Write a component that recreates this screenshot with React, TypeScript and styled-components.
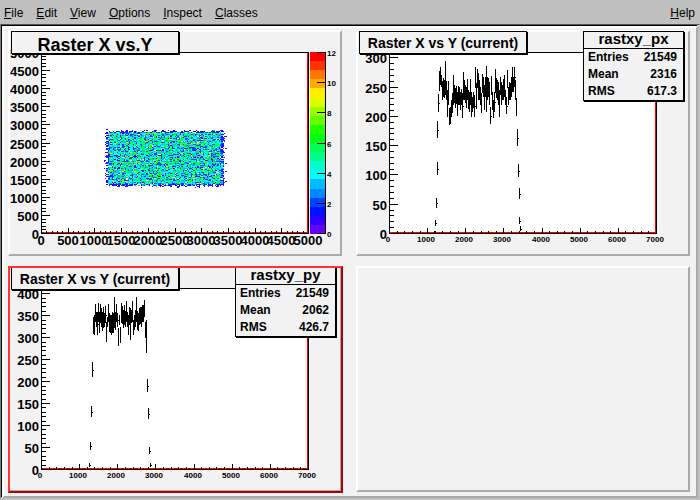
import React from "react";
import styled, { createGlobalStyle } from "styled-components";

const GlobalStyle = createGlobalStyle`
  * { box-sizing: border-box; }
  body { margin: 0; background: #c0c0c0; font-family: "Liberation Sans", Arial, sans-serif; color: #000; }
`;

const Window = styled.div`
  background: #c0c0c0;
`;

const MenuBar = styled.nav`
  display: flex;
  gap: 13px;
  height: 24px;
  padding: 0 5px 0 4px;
  align-items: center;
`;

const MenuButton = styled.button<{ $end?: boolean }>`
  border: 0;
  padding: 2px 0 0;
  background: none;
  font: 12px/16px "Liberation Sans", Arial, sans-serif;
  color: #000;
  margin-left: ${(p) => (p.$end ? "auto" : "0")};
  u { text-underline-offset: 1px; }
`;

const CanvasFrame = styled.div`
  border: 1px solid;
  border-color: #555 #c0c0c0 #c0c0c0 #808080;
`;

const Canvas = styled.main`
  display: grid;
  grid-template-columns: repeat(2, minmax(0, 1fr));
  gap: 10px 14px;
  padding: 2px 6px 4px 4px;
  background: #f2f2f2;
  border: 2px solid;
  border-color: #fff #aaa #aaa #fff;
  box-shadow: -1px -1px 0 #000;
  margin: 1px 1px 0 1px;
`;

const Pad = styled.section<{ $active?: boolean }>`
  position: relative;
  background: #f2f2f2;
  border: 2px solid;
  border-color: #fff #aaa #aaa #fff;
  &::after {
    content: "";
    display: ${(p) => (p.$active ? "block" : "none")};
    position: absolute;
    inset: -2px -3px -3px -2px;
    border: 2px solid;
    border-color: #ff3333 #b20000 #b20000 #ff3333;
    pointer-events: none;
  }
`;

const Plot = styled.svg`
  display: block;
  width: 100%;
  height: auto;
  font-family: "Liberation Sans", Arial, sans-serif;
  font-weight: bold;
`;

const PadTitle = styled.h2<{ $large?: boolean }>`
  position: absolute;
  top: -1px;
  left: 1px;
  width: 168px;
  height: 23px;
  margin: 0;
  border: 1px solid #000;
  box-shadow: 1px 1px 0 #000;
  background: #f2f2f2;
  text-align: center;
  white-space: nowrap;
  font-weight: bold;
  font-size: ${(p) => (p.$large ? "18px" : "14px")};
  line-height: ${(p) => (p.$large ? "26px" : "22px")};
`;

const Stats = styled.table`
  position: absolute;
  top: -1px;
  right: 4px;
  width: 101px;
  border-collapse: separate;
  border-spacing: 0;
  border: 1px solid #000;
  box-shadow: 1px 1px 0 #000;
  background: #f2f2f2;
  font-size: 12px;
  font-weight: bold;
  line-height: 17px;
  th, td { padding: 0 6px 0 4px; text-align: left; }
  th { padding-right: 0; }
  td { text-align: right; }
  thead th {
    height: 17px;
    padding: 0;
    border-bottom: 1px solid #000;
    font-size: 15px;
    line-height: 13px;
    text-align: center;
    vertical-align: top;
  }
`;

const LEFT = 31;
const RIGHT = 298;
const TOP = 20;
const BOTTOM = 201;

type Bar = [number, number, number];

const run = (start: number, text: string): Bar[] =>
  text.split(" ").map((pair, i) => {
    const [a, b] = pair.split("-").map(Number);
    return [start + i, a, b];
  });

const pxBody = run(
  80,
  "62-80 39-59 35-53 43-55 49-68 46-65 48-66 29-63 49-68 58-85 49-73 76-93 75-92 68-85 61-81 43-73 53-71 56-76 54-72 60-84 54-73 55-73 60-78 57-73 61-86 40-68 48-68 53-71 55-76 47-68 58-77 60-80 47-73 60-85 65-80 60-76 63-85 35-56 51-77 37-56 41-68 48-68 55-73 61-81 42-61 45-65 53-78 45-65 34-80 45-68 46-65 50-73 75-92 44-63 60-78 68-86 60-80 37-61 46-66 48-68 50-73 58-85 45-63 50-73 53-68 47-68 43-65 58-73 65-82 38-56 55-73 50-68 51-68 45-65 35-60 45-60 35-55 48-68 66-84"
);
const pxTails: Bar[] = [
  [79, 89, 106], [79, 130, 143], [78, 166, 176], [77, 188, 194], [76, 199, 201],
  [159, 97, 114], [160, 132, 145], [161, 156, 167], [161, 185, 192], [162, 194, 199],
];
const pyBody = run(
  83,
  "49-66 47-67 36-54 44-59 44-67 35-54 44-65 36-55 40-59 44-63 39-60 45-59 38-55 54-74 49-59 36-54 45-64 47-65 47-67 44-65 45-65 29-60 44-62 36-54 45-59 60-78 47-57 59-75 35-55 38-56 42-60 37-57 43-59 33-54 44-59 47-67 39-57 40-72 42-55 33-54 52-67 47-62 42-59 29-54 43-62 45-63 40-57 39-56 39-59 37-54 37-54 32-49 54-70 52-85"
);
const pyTails: Bar[] = [
  [82, 94, 109], [81, 138, 149], [80, 174, 182], [79, 195, 199],
  [137, 111, 124], [138, 140, 151], [139, 179, 186], [140, 195, 199],
];

const palette = [
  "#6600ff", "#3300ff", "#0011ff", "#0044ff", "#0088ff", "#00bbff", "#00ffff",
  "#00ffcc", "#00ff88", "#00ff55", "#00ff11", "#22ff00", "#66ff00", "#99ff00",
  "#ddff00", "#ffee00", "#ffaa00", "#ff7700", "#ff3300", "#ff0000",
];

const range = (n: number) => Array.from({ length: n }, (_, i) => i);

/* Axes and frame. Every major interval is split into five minor ones. */
function Axes(props: {
  xMax: number; xStep: number; yMax: number; yStep: number; smallX?: boolean;
}) {
  const { xMax, xStep, yMax, yStep, smallX } = props;
  const sx = (v: number) => Math.round(LEFT + (v / xMax) * (RIGHT - LEFT));
  const sy = (v: number) => Math.round(BOTTOM - (v / yMax) * (BOTTOM - TOP));
  const xs = range(Math.floor((xMax / xStep) * 5 + 0.01) + 1);
  const ys = range(Math.floor((yMax / yStep) * 5 + 0.01) + 1);
  const xTicks = xs.map((i) => {
    const h = i % 5 ? 2 : 5;
    return `M${sx((i * xStep) / 5)} ${BOTTOM - h}h1v${h}h-1z`;
  });
  const yTicks = ys.map((i) => `M${LEFT} ${sy((i * yStep) / 5)}h${i % 5 ? 5 : 9}v1h-${i % 5 ? 5 : 9}z`);
  return (
    <g>
      <g shapeRendering="crispEdges">
        <path d={`M${LEFT} ${BOTTOM - 1}H${RIGHT}v1H${LEFT}zM${RIGHT - 1} ${TOP}h1V${BOTTOM}h-1z`} fill="#f00" />
        <path
          d={`M${LEFT} ${TOP}H${RIGHT + 1}V${BOTTOM + 1}H${LEFT}zM${LEFT + 1} ${TOP + 1}V${BOTTOM}H${RIGHT}V${TOP + 1}z`}
          fillRule="evenodd"
        />
        <path d={xTicks.join("") + yTicks.join("")} />
      </g>
      {ys.filter((i) => i % 5 === 0).map((i) => (
        <text key={i} x={29} y={sy((i * yStep) / 5) + 6} fontSize={13} textAnchor="end">
          {(i * yStep) / 5}
        </text>
      ))}
      {xs.filter((i) => i % 5 === 0).map((i) => (
        <text
          key={i}
          x={sx((i * xStep) / 5) - (smallX ? 1 : 0)}
          y={smallX ? 210 : 213}
          fontSize={smallX ? 8 : 13}
          textAnchor="middle"
        >
          {(i * xStep) / 5}
        </text>
      ))}
    </g>
  );
}

function Profile({ body, tails, yMax }: { body: Bar[]; tails: Bar[]; yMax: number }) {
  const bars = [...body, ...tails].map(([x, a, b]) => `M${x} ${a}h1V${b}h-1z`);
  const marks = tails.map(([x, a, b]) => `M${x} ${Math.round((a + b) / 2)}h2v1h-2z`);
  const nubs = body
    .filter((_, i) => i % 4 === 0)
    .map(([x, a, b]) => `M${x} ${Math.round((a + b) / 2)}h2v1h-2z`);
  return (
    <Plot viewBox="0 0 330 222" role="img">
      <rect x={LEFT} y={TOP} width={RIGHT - LEFT} height={BOTTOM - TOP} fill="#fff" />
      <Axes xMax={7000} xStep={1000} yMax={yMax} yStep={50} smallX />
      <path d={[...bars, ...marks, ...nubs].join("")} shapeRendering="crispEdges" />
    </Plot>
  );
}

/* Bins of 25 x 25 units filled with Poisson counts, one path per colour. */
function buildScatter() {
  let seed = 20617;
  const rand = () => {
    seed = (seed * 1664525 + 1013904223) % 4294967296;
    return seed / 4294967296;
  };
  const poisson = (mean: number) => {
    const limit = Math.exp(-mean);
    let n = 0;
    let p = rand();
    while (p > limit) {
      n += 1;
      p *= rand();
    }
    return n;
  };
  const edge = (d: number) => (d < -3 ? 0 : d < -2 ? 0.01 : d < -1 ? 0.06 : d < 0 ? 0.25 : d < 1 ? 0.55 : d < 2 ? 0.8 : 1);
  const px = (i: number) => Math.round(LEFT + (i * (RIGHT - LEFT)) / 200);
  const py = (j: number) => Math.round(BOTTOM - (j * (BOTTOM - TOP)) / 200);
  const paths = palette.map(() => "");
  for (let i = 45; i < 142; i += 1) {
    for (let j = 48; j < 118; j += 1) {
      const weight = edge(Math.min(i - 50, 135 - i)) * edge(Math.min(j - 53, 111 - j));
      const n = Math.min(12, poisson(3.9 * weight));
      if (n > 0) {
        const color = Math.min(19, Math.floor((n * 20) / 12));
        const top = py(j + 1);
        paths[color] += `M${px(i)} ${top}H${px(i + 1)}V${Math.max(py(j), top + 1)}H${px(i)}z`;
      }
    }
  }
  return paths;
}

const scatter = buildScatter();

function Scatter() {
  const level = (i: number) => Math.round(BOTTOM + 1 - (i * (BOTTOM + 1 - TOP)) / 20);
  return (
    <Plot viewBox="0 0 330 222" role="img">
      <rect x={LEFT} y={TOP} width={RIGHT - LEFT} height={BOTTOM - TOP} fill="#fff" />
      <g shapeRendering="crispEdges">
        {scatter.map((d, i) => (
          <path key={i} d={d} fill={palette[i]} />
        ))}
        {palette.map((c, i) => (
          <rect key={c} x={300} y={level(i + 1)} width={15} height={level(i) - level(i + 1)} fill={c} />
        ))}
        <path d="M315 20h1v182h-1z" />
      </g>
      {range(7).map((i) => {
        const y = Math.round(BOTTOM - (i * (BOTTOM - TOP)) / 6);
        return (
          <g key={i}>
            <rect x={307} y={y} width={8} height={1} />
            <text x={317} y={y + 4} fontSize={8}>{i * 2}</text>
          </g>
        );
      })}
      <Axes xMax={5000} xStep={500} yMax={5000} yStep={500} />
    </Plot>
  );
}

function StatBox({ name, rows }: { name: string; rows: [string, string][] }) {
  return (
    <Stats>
      <thead>
        <tr><th colSpan={2}>{name}</th></tr>
      </thead>
      <tbody>
        {rows.map(([label, value]) => (
          <tr key={label}>
            <th scope="row">{label}</th>
            <td>{value}</td>
          </tr>
        ))}
      </tbody>
    </Stats>
  );
}

const menus = ["File", "Edit", "View", "Options", "Inspect", "Classes", "Help"];

export default function App() {
  return (
    <Window>
      <GlobalStyle />
      <MenuBar>
        {menus.map((m) => (
          <MenuButton key={m} type="button" $end={m === "Help"}>
            <u>{m[0]}</u>{m.slice(1)}
          </MenuButton>
        ))}
      </MenuBar>
      <CanvasFrame>
        <Canvas>
          <Pad>
            <Scatter />
            <PadTitle $large>Raster X vs.Y</PadTitle>
          </Pad>
          <Pad>
            <Profile body={pxBody} tails={pxTails} yMax={309} />
            <PadTitle>Raster X vs Y (current)</PadTitle>
            <StatBox name="rastxy_px" rows={[["Entries", "21549"], ["Mean", "2316"], ["RMS", "617.3"]]} />
          </Pad>
          <Pad $active>
            <Profile body={pyBody} tails={pyTails} yMax={412} />
            <PadTitle>Raster X vs Y (current)</PadTitle>
            <StatBox name="rastxy_py" rows={[["Entries", "21549"], ["Mean", "2062"], ["RMS", "426.7"]]} />
          </Pad>
          <Pad />
        </Canvas>
      </CanvasFrame>
    </Window>
  );
}
